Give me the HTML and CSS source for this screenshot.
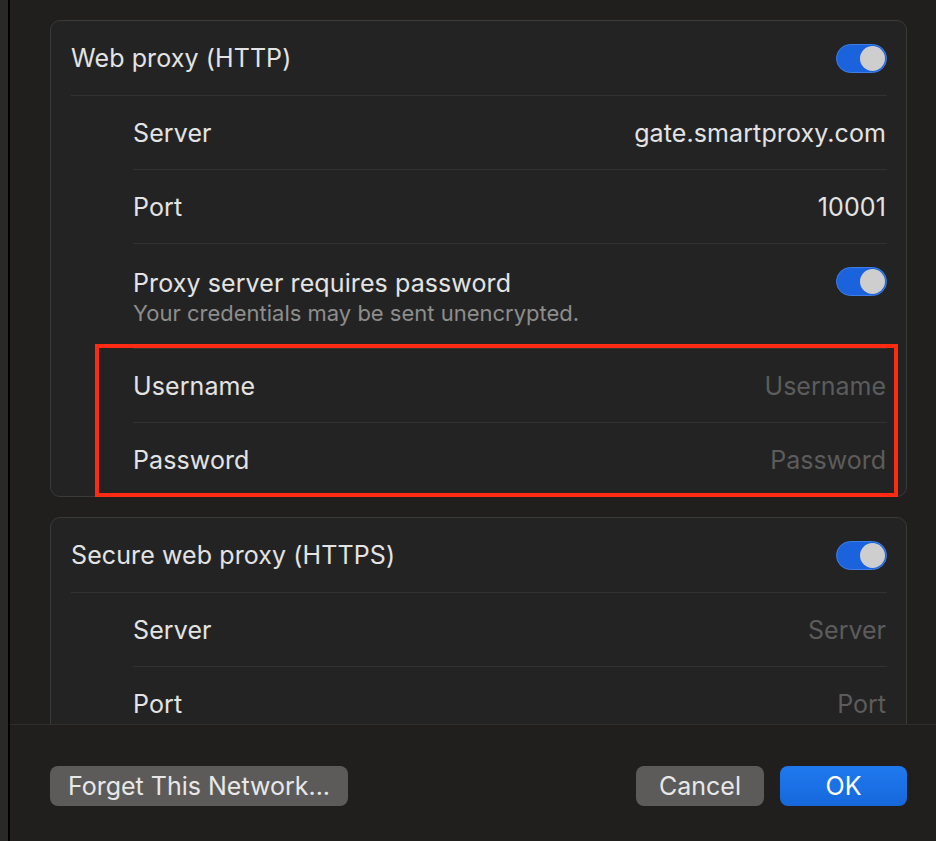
FILE: index.html
```html
<!DOCTYPE html>
<html>
<head>
<meta charset="utf-8">
<link rel="stylesheet" href="styles.css">
</head>
<body>
<div class="app">
  <div class="side"></div>
  <div class="sideline"></div>
  <div class="main">
    <div class="scroll">
      <div class="card card-http">
        <div class="row head">
          <span class="title">Web proxy (HTTP)</span>
          <span class="toggle"><span class="knob"></span></span>
        </div>
        <div class="sub">
          <div class="row">
            <span class="label">Server</span>
            <span class="value">gate.smartproxy.com</span>
          </div>
          <div class="row">
            <span class="label">Port</span>
            <span class="value">10001</span>
          </div>
          <div class="row tall">
            <div class="labels">
              <span class="label">Proxy server requires password</span>
              <span class="hint">Your credentials may be sent unencrypted.</span>
            </div>
            <span class="toggle top"><span class="knob"></span></span>
          </div>
          <div class="row">
            <span class="label">Username</span>
            <span class="placeholder">Username</span>
          </div>
          <div class="row last">
            <span class="label">Password</span>
            <span class="placeholder">Password</span>
          </div>
        </div>
        <div class="highlight"></div>
      </div>
      <div class="card">
        <div class="row head">
          <span class="title">Secure web proxy (HTTPS)</span>
          <span class="toggle"><span class="knob"></span></span>
        </div>
        <div class="sub">
          <div class="row">
            <span class="label">Server</span>
            <span class="placeholder">Server</span>
          </div>
          <div class="row">
            <span class="label">Port</span>
            <span class="placeholder">Port</span>
          </div>
        </div>
      </div>
    </div>
    <div class="footer">
      <button class="btn forget">Forget This Network...</button>
      <div class="right">
        <button class="btn cancel">Cancel</button>
        <button class="btn ok">OK</button>
      </div>
    </div>
  </div>
</div>
</body>
</html>
```

FILE: styles.css
```css
html, body {
  margin: 0;
  padding: 0;
  background: #201f1d;
  font-family: Inter, "Noto Sans", sans-serif;
  color: #e3e3e3;
  overflow: hidden;
}
.app {
  display: flex;
  width: 936px;
  height: 841px;
}
.side {
  width: 8px;
  background: #292927;
  flex: none;
}
.sideline {
  width: 2px;
  background: #000;
  flex: none;
}
.main {
  flex: 1;
  display: flex;
  flex-direction: column;
  min-width: 0;
}
.scroll {
  height: 704px;
  overflow: hidden;
  padding: 20px 29px 0 40px;
  display: flex;
  flex-direction: column;
  gap: 20px;
  border-bottom: 1px solid #2f2e2d;
  flex: none;
}
.card {
  position: relative;
  background: #232323;
  border: 1px solid #3a3a39;
  border-radius: 10px;
  padding: 0 19px 0 20px;
  flex: none;
}
.row {
  display: flex;
  align-items: center;
  justify-content: space-between;
  height: 73px;
  border-bottom: 1px solid #323232;
}
.row.head {
  height: 74px;
}
.row.tall {
  height: 104px;
}
.row.last {
  border-bottom: none;
}
.sub {
  padding-left: 62px;
}
.title, .label, .value {
  font-size: 25px;
  color: #e3e3e3;
  letter-spacing: 0.1px;
}
.value {
  margin-right: 1px;
}
.placeholder {
  font-size: 25px;
  color: #5c5c5c;
  margin-right: 1px;
}
.labels {
  display: flex;
  flex-direction: column;
  gap: 2px;
  margin-top: 2px;
}
.hint {
  font-size: 22px;
  color: #8d8d8d;
}
.toggle {
  position: relative;
  width: 49px;
  height: 27px;
  border-radius: 15px;
  background: #1b63dc;
  border: 1px solid #3f7de6;
  flex: none;
}
.toggle.top {
  align-self: flex-start;
  margin-top: 23px;
}
.knob {
  position: absolute;
  right: 1px;
  top: 1px;
  width: 25px;
  height: 25px;
  border-radius: 50%;
  background: #cecece;
}
.highlight {
  position: absolute;
  left: 44px;
  top: 323px;
  width: 795px;
  height: 145px;
  border: 4px solid #ff2a12;
}
.footer {
  display: flex;
  justify-content: space-between;
  align-items: flex-start;
  padding: 41px 29px 0 40px;
}
.right {
  display: flex;
  gap: 16px;
}
.btn {
  display: flex;
  align-items: center;
  justify-content: center;
  height: 40px;
  border: none;
  border-radius: 8px;
  background: #5c5b59;
  color: #e8e8e8;
  font-family: Inter, "Noto Sans", sans-serif;
  font-size: 25px;
  line-height: 30px;
  padding: 0;
  white-space: nowrap;
}
.forget {
  width: 298px;
}
.cancel {
  width: 128px;
}
.ok {
  width: 127px;
  background: linear-gradient(#1f79ee, #1668db);
  color: #fff;
}
```
